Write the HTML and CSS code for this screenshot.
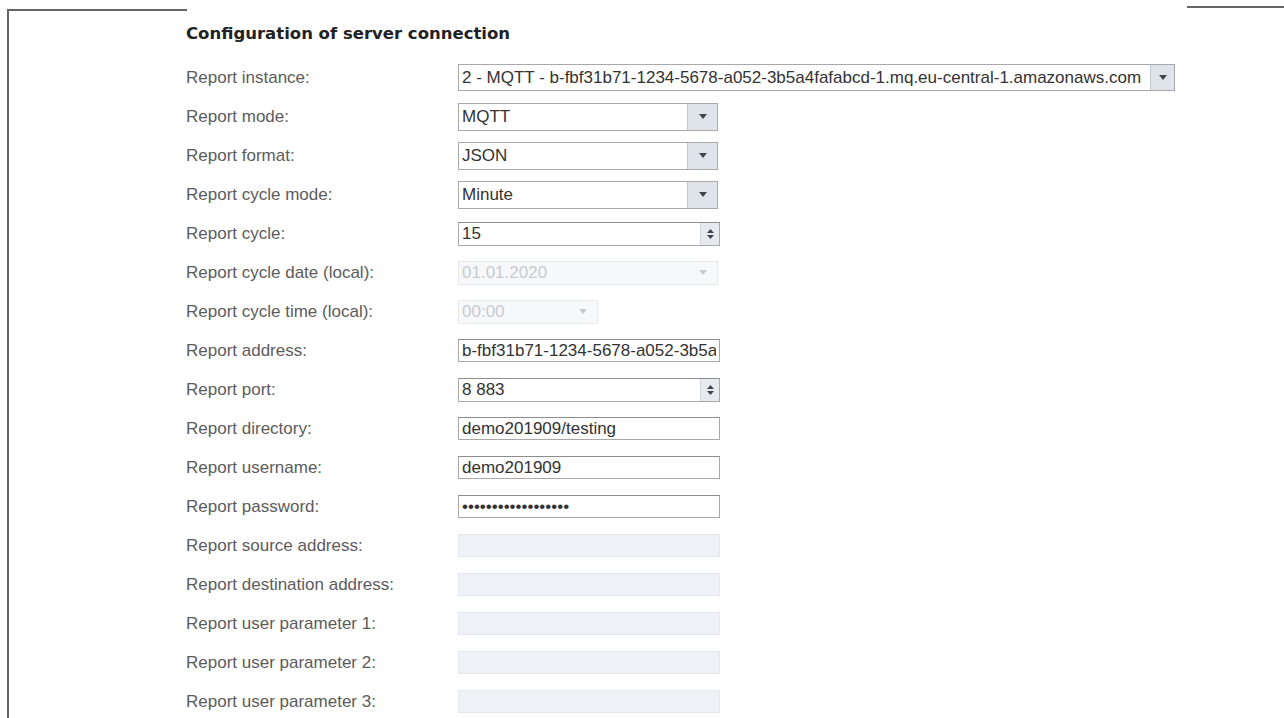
FILE: index.html
```html
<!DOCTYPE html>
<html lang="en">
<head>
  <meta charset="UTF-8">
  <title>Configuration of server connection</title>
  <meta name="viewport" content="width=device-width, initial-scale=1.0">
  <link rel="stylesheet" href="styles.css">
</head>
<body>

<div class="frame">
  <div class="frame-top">
    <span class="edge edge-left"></span>
    <span class="edge edge-right"></span>
  </div>

  <h2>Configuration of server connection</h2>

  <div class="form">
    <div class="row">
      <label>Report instance:</label>
      <div class="combo combo-wide">
        <input type="text" readonly value="2 - MQTT - b-fbf31b71-1234-5678-a052-3b5a4fafabcd-1.mq.eu-central-1.amazonaws.com">
        <span class="trigger"><svg width="8" height="5" viewBox="0 0 8 5"><path d="M0 0h8L4 5z"/></svg></span>
      </div>
    </div>
    <div class="row">
      <label>Report mode:</label>
      <div class="combo">
        <input type="text" readonly value="MQTT">
        <span class="trigger"><svg width="8" height="5" viewBox="0 0 8 5"><path d="M0 0h8L4 5z"/></svg></span>
      </div>
    </div>
    <div class="row">
      <label>Report format:</label>
      <div class="combo">
        <input type="text" readonly value="JSON">
        <span class="trigger"><svg width="8" height="5" viewBox="0 0 8 5"><path d="M0 0h8L4 5z"/></svg></span>
      </div>
    </div>
    <div class="row">
      <label>Report cycle mode:</label>
      <div class="combo">
        <input type="text" readonly value="Minute">
        <span class="trigger"><svg width="8" height="5" viewBox="0 0 8 5"><path d="M0 0h8L4 5z"/></svg></span>
      </div>
    </div>
    <div class="row">
      <label>Report cycle:</label>
      <div class="combo spin">
        <input type="text" value="15">
        <span class="trigger"><svg width="7" height="12" viewBox="0 0 7 12"><path d="M3.5 1L7 5H0z M0 7h7L3.5 11z"/></svg></span>
      </div>
    </div>
    <div class="row">
      <label>Report cycle date (local):</label>
      <div class="combo disabled">
        <input type="text" disabled value="01.01.2020">
        <span class="trigger"><svg width="8" height="5" viewBox="0 0 8 5"><path d="M0 0h8L4 5z"/></svg></span>
      </div>
    </div>
    <div class="row">
      <label>Report cycle time (local):</label>
      <div class="combo combo-short disabled">
        <input type="text" disabled value="00:00">
        <span class="trigger"><svg width="8" height="5" viewBox="0 0 8 5"><path d="M0 0h8L4 5z"/></svg></span>
      </div>
    </div>
    <div class="row">
      <label>Report address:</label>
      <input class="field" type="text" value="b-fbf31b71-1234-5678-a052-3b5a4fafabcd-1.mq.eu-central-1.amazonaws.com">
    </div>
    <div class="row">
      <label>Report port:</label>
      <div class="combo spin">
        <input type="text" value="8 883">
        <span class="trigger"><svg width="7" height="12" viewBox="0 0 7 12"><path d="M3.5 1L7 5H0z M0 7h7L3.5 11z"/></svg></span>
      </div>
    </div>
    <div class="row">
      <label>Report directory:</label>
      <input class="field" type="text" value="demo201909/testing">
    </div>
    <div class="row">
      <label>Report username:</label>
      <input class="field" type="text" value="demo201909">
    </div>
    <div class="row">
      <label>Report password:</label>
      <input class="field" type="password" value="demo201909secret!!">
    </div>
    <div class="row">
      <label>Report source address:</label>
      <input class="field" type="text" disabled>
    </div>
    <div class="row">
      <label>Report destination address:</label>
      <input class="field" type="text" disabled>
    </div>
    <div class="row">
      <label>Report user parameter 1:</label>
      <input class="field" type="text" disabled>
    </div>
    <div class="row">
      <label>Report user parameter 2:</label>
      <input class="field" type="text" disabled>
    </div>
    <div class="row">
      <label>Report user parameter 3:</label>
      <input class="field" type="text" disabled>
    </div>
  </div>
</div>

</body>
</html>
```

FILE: styles.css
```css
body {
  margin: 0;
  background: #fff;
  font-family: "Liberation Sans", Arial, sans-serif;
  overflow: hidden;
}

/* outer group box: only the top edges and the left side are visible */
.frame {
  margin: 9px 0 0 7px;
  border-left: 2px solid #666;
  min-height: calc(100vh - 9px);
}

.frame-top {
  display: flex;
  justify-content: space-between;
  height: 2px;
  margin-left: -2px;
}

.edge {
  display: block;
  height: 2px;
  background: #666;
}

.edge-left { width: 180px; }
.edge-right { width: 97px; margin-top: -3px; }

h2 {
  margin: 0;
  padding: 13px 0 0 177px;
  font: bold 16.5px/20px "DejaVu Sans", Verdana, sans-serif;
  color: #222;
}

.form {
  margin-top: 14px;
  padding-left: 177px;
}

.row {
  display: grid;
  grid-template-columns: 272px auto;
  justify-items: start;
  align-items: center;
  height: 39px;
}

.row label {
  font-size: 17px;
  color: #5c5c5c;
}

/* plain text fields */
.field {
  box-sizing: border-box;
  width: 262px;
  height: 23px;
  margin: 0;
  padding: 0 3px;
  border: 1px solid #a8a8a8;
  border-top-color: #8e8e8e;
  background: #fff;
  font: 17px "Liberation Sans", Arial, sans-serif;
  color: #333;
  outline: none;
}

.field:disabled {
  background: #eef1f6;
  border-color: #e4e7ec;
}

/* combo boxes and spinners: text part plus trigger button */
.combo {
  box-sizing: border-box;
  display: flex;
  width: 260px;
  height: 28px;
  border: 1px solid #a9a9a9;
  background: #fff;
}

.combo input {
  flex: 1;
  min-width: 0;
  margin: 0;
  padding: 0 3px;
  border: 0;
  background: transparent;
  font: 17px "Liberation Sans", Arial, sans-serif;
  color: #333;
  outline: none;
}

.combo .trigger {
  display: flex;
  align-items: center;
  justify-content: center;
  width: 29px;
  background: #dfe4ea;
  border-left: 1px solid #c3c9d1;
}

.combo .trigger svg { fill: #3d4651; }

.combo-wide { width: 717px; height: 27px; }
.combo-wide .trigger { width: 23px; }

.spin {
  width: 262px;
  height: 24px;
  border-top-color: #8e8e8e;
}

.spin .trigger {
  width: 18px;
  background: #e6e9ee;
  border-left-color: #d0d4da;
}

.combo.disabled {
  height: 24px;
  border-color: #e6e8eb;
  background: #f7f8fa;
}

.combo.disabled input { color: #c9cbcf; }

.combo.disabled .trigger {
  background: transparent;
  border-left: 0;
}

.combo.disabled .trigger svg { fill: #c6c9ce; }

.combo-short { width: 140px; }
```
